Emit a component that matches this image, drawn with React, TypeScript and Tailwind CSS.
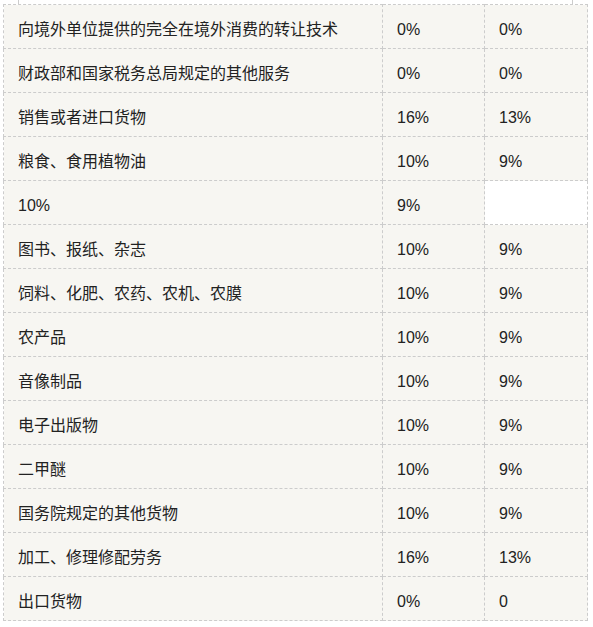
import React from "react";

const rows: [string, string, string][] = [
  ["向境外单位提供的完全在境外消费的转让技术", "0%", "0%"],
  ["财政部和国家税务总局规定的其他服务", "0%", "0%"],
  ["销售或者进口货物", "16%", "13%"],
  ["粮食、食用植物油", "10%", "9%"],
  ["10%", "9%", ""],
  ["图书、报纸、杂志", "10%", "9%"],
  ["饲料、化肥、农药、农机、农膜", "10%", "9%"],
  ["农产品", "10%", "9%"],
  ["音像制品", "10%", "9%"],
  ["电子出版物", "10%", "9%"],
  ["二甲醚", "10%", "9%"],
  ["国务院规定的其他货物", "10%", "9%"],
  ["加工、修理修配劳务", "16%", "13%"],
  ["出口货物", "0%", "0"],
];

export default function App() {
  return (
    <div
      className="w-[593px] h-[627px] bg-white text-[16px] text-[#222]"
      style={{ fontFamily: '"Liberation Sans", "Noto Sans CJK SC", sans-serif' }}
    >
      <div className="h-[4px] ml-[18px] w-[555px] border-x border-dashed border-[#ccc]" />
      <table className="ml-[3px] w-[584px] border-collapse table-fixed">
        <colgroup>
          <col className="w-[379px]" />
          <col className="w-[102px]" />
          <col className="w-[103px]" />
        </colgroup>
        <tbody>
          {rows.map((r, i) => (
            <tr key={i} className="h-[44px]">
              {r.map((c, j) => (
                <td
                  key={j}
                  className={
                    "border border-dashed border-[#ccc] px-[14px] pt-[7px] align-middle leading-[20px] " +
                    (i === 4 && j === 2 ? "bg-white" : "bg-[#f7f6f2]")
                  }
                >
                  {c}
                </td>
              ))}
            </tr>
          ))}
        </tbody>
      </table>
    </div>
  );
}
